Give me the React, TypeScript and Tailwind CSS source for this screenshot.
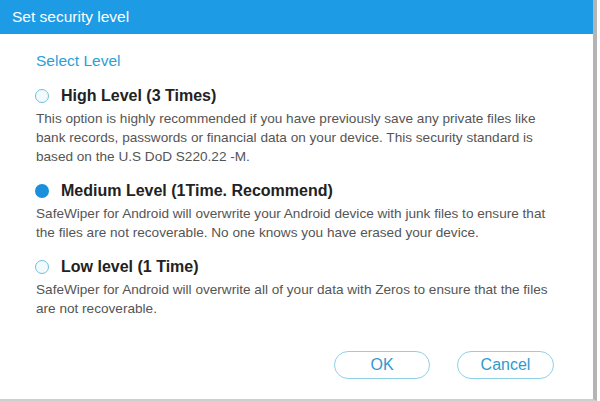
import React, { useState } from "react";

const levels = [
  {
    id: "high",
    title: "High Level (3 Times)",
    text: [
      "This option is highly recommended if you have previously save any private files like",
      "bank records, passwords or financial data on your device. This security standard is",
      "based on the U.S DoD S220.22 -M.",
    ],
  },
  {
    id: "medium",
    title: "Medium Level (1Time. Recommend)",
    text: [
      "SafeWiper for Android will overwrite your Android device with junk files to ensure that",
      "the files are not recoverable. No one knows you have erased your device.",
    ],
  },
  {
    id: "low",
    title: "Low level (1 Time)",
    text: [
      "SafeWiper for Android will overwrite all of your data with Zeros to ensure that the files",
      "are not recoverable.",
    ],
  },
];

function Radio({ checked }: { checked: boolean }) {
  return checked ? (
    <span className="w-[14px] h-[14px] rounded-full bg-[#1a8fdc] shrink-0" />
  ) : (
    <span className="w-[14px] h-[14px] rounded-full border-[1.5px] border-[#6fc0dc] bg-[#f2fafd] shrink-0" />
  );
}

export default function App() {
  const [level, setLevel] = useState("medium");

  return (
    <div
      className="w-[600px] h-[401px] bg-white"
      style={{ fontFamily: '"Liberation Sans", Arial, sans-serif' }}
    >
      <div className="w-[597px] h-[401px] flex flex-col border-r-[4px] border-b-[2px] border-r-[#b4b4b4] border-b-[#cfcfcf] bg-white">
        {/* HEADER */}
        <div className="h-[34px] bg-[#1d9be5] flex items-center pl-[12px] text-white text-[15.5px]">
          Set security level
        </div>

        {/* BODY */}
        <div className="flex flex-col pl-[35px] pt-[17px]">
          <div className="pl-[1px] text-[15.5px] text-[#2a9fd8] leading-[20px]">Select Level</div>

          {levels.map((l) => (
            <div key={l.id} className="mt-[15px]">
              <label
                className="flex items-center gap-[12px] cursor-pointer"
                onClick={() => setLevel(l.id)}
              >
                <Radio checked={level === l.id} />
                <span className="font-bold text-[16px] text-[#222] leading-[20px]">{l.title}</span>
              </label>
              <div className="mt-[3px] pl-[1px] text-[13.6px] text-[#555] leading-[19px] whitespace-nowrap">
                {l.text.map((t) => (
                  <div key={t}>{t}</div>
                ))}
              </div>
            </div>
          ))}
        </div>

        {/* BUTTONS */}
        <div className="flex justify-end gap-[27px] pr-[39px] mt-auto mb-[20px]">
          <button className="w-[96px] h-[28px] rounded-full border border-[#8fd0e6] text-[16px] text-[#3399cc] bg-white">
            OK
          </button>
          <button className="w-[97px] h-[28px] rounded-full border border-[#8fd0e6] text-[16px] text-[#3399cc] bg-white">
            Cancel
          </button>
        </div>
      </div>
    </div>
  );
}
